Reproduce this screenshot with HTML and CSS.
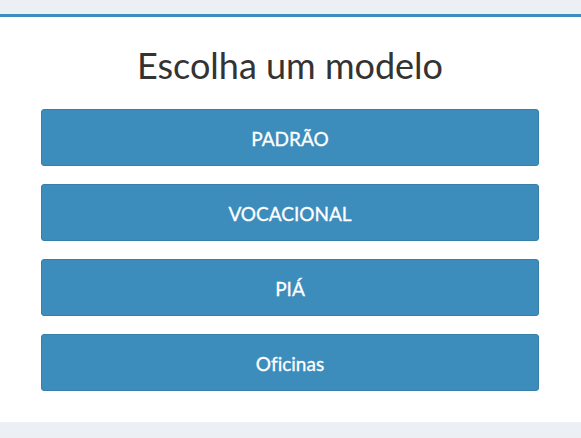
FILE: index.html
```html
<!DOCTYPE html>
<html lang="pt">
<head>
<meta charset="utf-8">
<title>Escolha um modelo</title>
<link rel="stylesheet" href="styles.css">
</head>
<body>
<div class="page">
  <section class="box">
    <h2 class="box-title">Escolha um modelo</h2>
    <div class="choices">
      <a class="btn" href="#">PADRÃO</a>
      <a class="btn" href="#">VOCACIONAL</a>
      <a class="btn" href="#">PIÁ</a>
      <a class="btn" href="#">Oficinas</a>
    </div>
  </section>
</div>
</body>
</html>
```
FILE: styles.css
```css
html, body {
  margin: 0;
  padding: 0;
  background: #ecf0f5;
  font-family: "Lato", "Open Sans", sans-serif;
  font-variant-ligatures: none;
}
.page {
  padding-top: 14px;
}
.box {
  background: #fff;
  border-top: 3px solid #3c8dbc;
  box-shadow: 0 1px 1px rgba(0, 0, 0, 0.1);
  padding: 0 42px 30px 41px;
  height: 408px;
  box-sizing: border-box;
}
.box-title {
  margin: 0;
  padding-top: 28px;
  height: 92px;
  box-sizing: border-box;
  text-align: center;
  font-weight: 400;
  font-size: 36px;
  line-height: 40px;
  color: #333;
}
.choices {
  display: flex;
  flex-direction: column;
  gap: 18px;
}
.btn {
  display: flex;
  align-items: center;
  justify-content: center;
  height: 57px;
  padding-top: 2px;
  box-sizing: border-box;
  background: #3c8dbc;
  border: 1px solid #367fa9;
  border-radius: 3px;
  color: #fff;
  text-decoration: none;
  font-size: 19px;
  -webkit-text-stroke: 0.3px #fff;
}
```
